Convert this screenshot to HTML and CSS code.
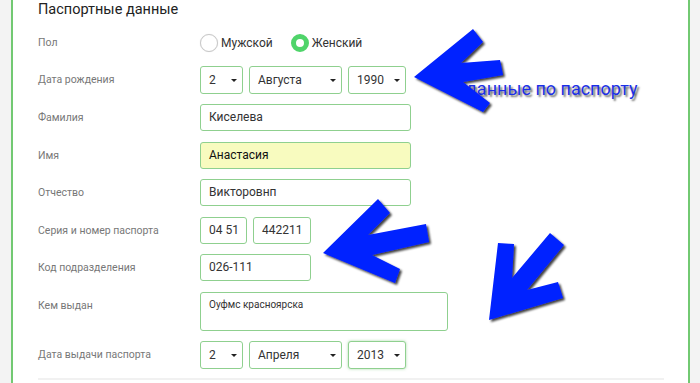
FILE: index.html
```html
<!DOCTYPE html>
<html lang="ru">
<head>
<meta charset="utf-8">
<title>Паспортные данные</title>
<link rel="stylesheet" href="styles.css">
</head>
<body>
<div class="page">
  <div class="card">
    <h2 class="title">Паспортные данные</h2>
    <div class="form">
      <div class="row row-radio">
        <div class="label">Пол</div>
        <div class="radios">
          <label class="radio"><span class="dot"></span>Мужской</label>
          <label class="radio checked"><span class="dot"></span>Женский</label>
        </div>
      </div>
      <div class="row">
        <div class="label">Дата рождения</div>
        <div class="group">
          <div class="select s-day">2<span class="caret"></span></div>
          <div class="select s-month">Августа<span class="caret"></span></div>
          <div class="select s-year">1990<span class="caret"></span></div>
        </div>
      </div>
      <div class="row">
        <div class="label">Фамилия</div>
        <div class="input w-long">Киселева</div>
      </div>
      <div class="row">
        <div class="label">Имя</div>
        <div class="input w-long filled">Анастасия</div>
      </div>
      <div class="row">
        <div class="label">Отчество</div>
        <div class="input w-long">Викторовнп</div>
      </div>
      <div class="row">
        <div class="label">Серия и номер паспорта</div>
        <div class="group">
          <div class="input w-ser">04 51</div>
          <div class="input w-num">442211</div>
        </div>
      </div>
      <div class="row">
        <div class="label">Код подразделения</div>
        <div class="input w-code">026-111</div>
      </div>
      <div class="row">
        <div class="label">Кем выдан</div>
        <div class="textarea">Оуфмс красноярска</div>
      </div>
      <div class="row">
        <div class="label">Дата выдачи паспорта</div>
        <div class="group">
          <div class="select s-day">2<span class="caret"></span></div>
          <div class="select s-month">Апреля<span class="caret"></span></div>
          <div class="select s-year focus">2013<span class="caret"></span></div>
        </div>
      </div>
    </div>
    <div class="divider"></div>
  </div>
</div>
<div class="note">данные по паспорту</div>
<svg class="arrows" width="700" height="383" viewBox="0 0 700 383">
  <defs>
    <filter id="sh" x="-20%" y="-20%" width="150%" height="150%">
      <feDropShadow dx="2" dy="2" stdDeviation="1.3" flood-color="#000" flood-opacity="0.75"/>
    </filter>
  </defs>
  <g fill="#0520ff" filter="url(#sh)">
    <polygon points="414,77 473,29 483,42 461,63 500,60 503,75 463,82 490,103 483,112"/>
    <polygon points="323,253 378,199 390,213 368,235 426,224 429,242 372,255 400,269 395,283"/>
    <polygon points="489,320 498,243 514,244 512,278 550,233 564,245 527,290 558,282 563,298"/>
  </g>
</svg>
</body>
</html>
```
FILE: styles.css
```css
* { box-sizing: border-box; }
html, body { margin: 0; padding: 0; }
body {
  background: #f3f3f3;
  font-family: Roboto, "Liberation Sans", Arial, sans-serif;
  width: 700px;
  height: 383px;
  overflow: hidden;
  position: relative;
}
.page { display: flex; height: 383px; }
.card {
  margin-left: 11px;
  width: 679px;
  height: 383px;
  background: #fff;
  border-left: 2px solid #72c972;
  border-right: 2px solid #72c972;
  padding-left: 25px;
}
.title {
  margin: 0;
  font-size: 14.5px;
  font-weight: 400;
  color: #222;
  line-height: 19px;
}
.form {
  display: flex;
  flex-direction: column;
  gap: 10.5px;
  margin-top: 15px;
}
.row { display: flex; align-items: flex-start; }
.row-radio { height: 18px; align-items: center; margin-bottom: 3px; }
.label {
  width: 162px;
  flex: none;
  font-size: 10.5px;
  color: #777;
  line-height: 27px;
}
.row-radio .label { line-height: 18px; }
.radios { display: flex; gap: 18px; }
.radio {
  display: flex;
  align-items: center;
  font-size: 12px;
  color: #333;
  gap: 3px;
}
.dot {
  width: 18px;
  height: 18px;
  border-radius: 50%;
  border: 1px solid #c8c8c8;
  background: #fff;
  box-shadow: 0 0 1px rgba(0, 0, 0, 0.15);
}
.radio.checked .dot {
  border: 5px solid #4fd46a;
  background: #fff;
  box-shadow: none;
}
.group { display: flex; gap: 6px; }
.input, .select, .textarea {
  border: 1px solid #8fd08f;
  border-radius: 3px;
  height: 27px;
  font-size: 12px;
  color: #333;
  line-height: 25px;
  padding-left: 8px;
  background: #fff;
}
.filled { background: #f8fbbf; color: #111; }
.w-long { width: 211px; }
.w-ser { width: 47px; }
.w-num { width: 58px; }
.w-code { width: 111px; }
.textarea {
  width: 248px;
  height: 39px;
  font-size: 10px;
  line-height: 14px;
  padding-top: 5px;
}
.select {
  position: relative;
  height: 28px;
  line-height: 26px;
}
.s-day { width: 43px; }
.s-month { width: 93px; }
.s-year { width: 58px; }
.focus { box-shadow: 0 0 3px rgba(100, 190, 100, 0.55); }
.caret {
  position: absolute;
  right: 5px;
  top: 12px;
  width: 0;
  height: 0;
  border-left: 3px solid transparent;
  border-right: 3px solid transparent;
  border-top: 3px solid #222;
}
.divider {
  margin-top: 9px;
  width: 626px;
  height: 2px;
  background: #f1f1f1;
}
.note {
  position: absolute;
  left: 466px;
  top: 78px;
  font-size: 18px;
  color: #1b2fe6;
  text-shadow: 2px 2px 2px rgba(0, 0, 0, 0.6);
  white-space: nowrap;
}
.arrows { position: absolute; left: 0; top: 0; pointer-events: none; }
```
